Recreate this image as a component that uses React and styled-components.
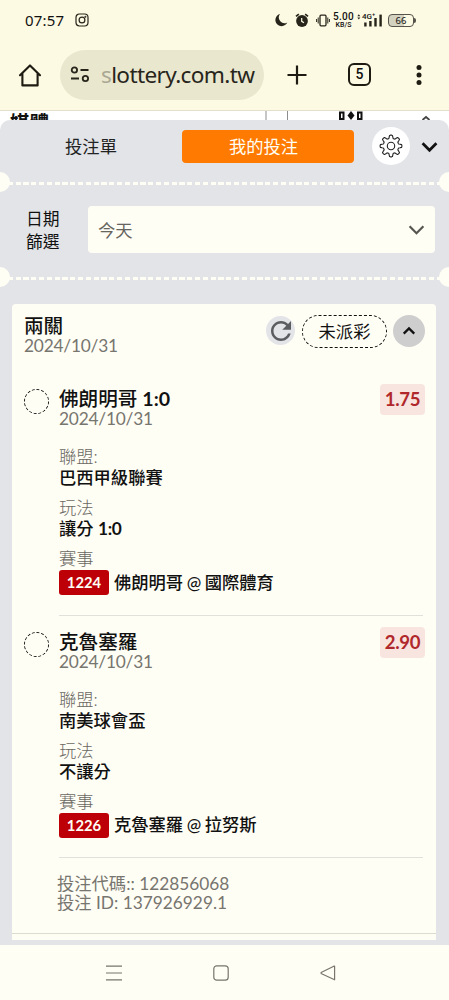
import React, { useState } from 'react';
import styled, { createGlobalStyle } from 'styled-components';

const legs = [
  {
    id: '1224',
    pick: '佛朗明哥',
    score: '1:0',
    date: '2024/10/31',
    odds: '1.75',
    league: '巴西甲級聯賽',
    market: '讓分',
    handicap: '1:0',
    match: '佛朗明哥 @ 國際體育',
  },
  {
    id: '1226',
    pick: '克魯塞羅',
    date: '2024/10/31',
    odds: '2.90',
    league: '南美球會盃',
    market: '不讓分',
    match: '克魯塞羅 @ 拉努斯',
  },
];

const StatusIcons = () => (
  <StatusRight>
    <svg width="13" height="14" viewBox="0 0 13 14">
      <path d="M5 1A6.2 6.2 0 1 0 12.3 9.4A5.7 5.7 0 0 1 5 1Z" fill="#27251b" />
    </svg>
    <svg width="14" height="15" viewBox="0 0 14 15">
      <circle cx="7" cy="8" r="5.9" fill="#27251b" />
      <path d="M1 3.4L3.8 1.1M13 3.4L10.2 1.1" stroke="#27251b" strokeWidth="1.7" />
      <path d="M6.7 5V8.3L9 9.8" stroke="#fdfae3" strokeWidth="1.2" fill="none" />
    </svg>
    <svg width="14" height="13" viewBox="0 0 14 13" fill="none" stroke="#27251b" strokeWidth="1.3">
      <rect x="4" y="1.2" width="6" height="10.6" rx="1" />
      <path d="M2.2 3.5V9.5M.6 5V8M11.8 3.5V9.5M13.4 5V8" strokeWidth="1" />
    </svg>
    <Speed>
      <b>5.00</b>
      <span>KB/S</span>
    </Speed>
    <Signal>
      <svg width="26" height="15" viewBox="0 0 26 15" fill="#27251b">
        <path d="M.3 3.2L1.8 1.2L3.3 3.2ZM.3 4.6L1.8 6.6L3.3 4.6Z" />
        <rect x="7.2" y="9.5" width="2.4" height="4" />
        <rect x="12.2" y="8" width="2.4" height="5.5" />
        <rect x="17.3" y="5" width="2.4" height="8.5" />
        <rect x="22.4" y="1.6" width="2.4" height="11.9" />
      </svg>
      <Network>4G⁺</Network>
    </Signal>
    <Battery>66</Battery>
  </StatusRight>
);

const Chevron = ({ up, size, color = '#111', weight }) => (
  <svg width={size} height={size} viewBox="0 0 16 16" fill="none" stroke={color} strokeWidth={weight}>
    <path d={up ? 'M2 11L8 5L14 11' : 'M1.5 5L8 11.5L14.5 5'} />
  </svg>
);

// gear with eight rounded teeth
const Gear = () => {
  const points = [];
  for (let i = 0; i <= 96; i++) {
    const a = (i / 96) * Math.PI * 2;
    const wave = Math.cos(a * 8);
    const r = 9.3 + 1.6 * Math.tanh(wave * 2.6);
    points.push(`${(12 + r * Math.sin(a)).toFixed(2)} ${(12 - r * Math.cos(a)).toFixed(2)}`);
  }
  return (
    <svg width="24" height="24" viewBox="0 0 24 24" fill="none" stroke="#222" strokeWidth="1.1" strokeLinejoin="round">
      <path d={`M${points.join('L')}Z`} />
      <circle cx="12" cy="12" r="3.7" />
    </svg>
  );
};

const Leg = ({ leg }) => (
  <LegRow>
    <DottedCircle />
    <LegBody>
      <LegHead>
        <div>
          <Title>{leg.pick} {leg.score && <b>{leg.score}</b>}</Title>
          <DateText>{leg.date}</DateText>
        </div>
        <Odds>{leg.odds}</Odds>
      </LegHead>
      <Field>
        <Label>聯盟:</Label>
        <Value>{leg.league}</Value>
      </Field>
      <Field>
        <Label>玩法</Label>
        <Value>{leg.market} {leg.handicap && <b>{leg.handicap}</b>}</Value>
      </Field>
      <Field>
        <Label>賽事</Label>
        <Match>
          <MatchId>{leg.id}</MatchId>
          <MatchName>{leg.match}</MatchName>
        </Match>
      </Field>
    </LegBody>
  </LegRow>
);

const App = () => {
  const [open, setOpen] = useState(true);

  return (
    <Phone>
      <GlobalStyle />
      <StatusBar>
        <Clock>07:57</Clock>
        <svg width="14" height="14" viewBox="0 0 14 14" fill="none" stroke="#27251b" strokeWidth="1.2">
          <rect x="1" y="1" width="12" height="12" rx="3.4" />
          <circle cx="7" cy="7" r="2.9" />
          <circle cx="10.4" cy="3.7" r=".4" />
        </svg>
        <StatusIcons />
      </StatusBar>

      <Toolbar>
        <HomeIcon width="24" height="24" viewBox="0 0 24 24">
          <path d="M2 12.2L12 2.4L22 12.2M4.4 10.5V22.4H19.6V10.5" />
        </HomeIcon>
        <AddressBar>
          <svg width="20" height="17" viewBox="0 0 20 17" fill="none" stroke="#27251b" strokeWidth="1.8">
            <circle cx="4.4" cy="4" r="2.7" />
            <path d="M10.5 4H18.5M1 12.5H9" />
            <circle cx="15.4" cy="12.5" r="2.7" />
          </svg>
          <Url><span>s</span>lottery.com.tw</Url>
        </AddressBar>
        <svg width="20" height="20" viewBox="0 0 20 20" stroke="#1d1b12" strokeWidth="2.2">
          <path d="M10 .5V19.5M.5 10H19.5" />
        </svg>
        <TabCount>5</TabCount>
        <svg width="6" height="20" viewBox="0 0 6 20" fill="#1d1b12">
          <circle cx="3" cy="2.5" r="2.5" />
          <circle cx="3" cy="10" r="2.5" />
          <circle cx="3" cy="17.5" r="2.5" />
        </svg>
      </Toolbar>

      <PageStrip>
        <StripText>媒體</StripText>
        <StripMarks width="170" height="9" viewBox="0 0 170 9">
          <path d="M2 0V9M23.5 0V9" stroke="#8d8d8d" />
          <path d="M76 8V1.5H79.5V8ZM94 8V1.5H97.5V8Z" stroke="#111" strokeWidth="2" fill="none" />
          <path d="M87 0L90.5 4.5L87 9L83.5 4.5Z" fill="#111" />
          <path d="M158.5 9L162 6L165.5 9" stroke="#444" strokeWidth="1.8" fill="none" />
        </StripMarks>
      </PageStrip>

      <Panel>
        <Tabs>
          <Tab>投注單</Tab>
          <ActiveTab>我的投注</ActiveTab>
          <GearButton><Gear /></GearButton>
          <Chevron size={17} weight={2.6} />
        </Tabs>
        <Perforation />
        <Filter>
          <FilterLabel>日期篩選</FilterLabel>
          <Select>
            今天
            <Chevron size={17} weight={2.1} color="#57554f" />
          </Select>
        </Filter>
        <Perforation />

        <Card>
          <CardHead>
            <div>
              <Title>兩關</Title>
              <DateText>2024/10/31</DateText>
            </div>
            <CardActions>
              <Refresh>
                <svg width="20" height="20" viewBox="4 4 16 16" fill="#5b5c60">
                  <path d="M17.65 6.35C16.2 4.9 14.21 4 12 4c-4.42 0-7.99 3.58-7.99 8s3.57 8 7.99 8c3.73 0 6.84-2.55 7.73-6h-2.08c-.82 2.33-3.04 4-5.65 4-3.31 0-6-2.69-6-6s2.69-6 6-6c1.66 0 3.14.69 4.22 1.78L13 11h7V4l-2.35 2.35z" />
                </svg>
              </Refresh>
              <Pending>未派彩</Pending>
              <Collapse onClick={() => setOpen(!open)}>
                <Chevron up={open} size={14} weight={2.6} />
              </Collapse>
            </CardActions>
          </CardHead>
          {open && legs.map((leg) => <Leg key={leg.id} leg={leg} />)}
          <Codes>
            <div>投注代碼:: 122856068</div>
            <div>投注 ID: 137926929.1</div>
          </Codes>
        </Card>
      </Panel>

      <NavBar>
        <svg width="16" height="16" viewBox="0 0 16 16">
          <path d="M0 1.2H16M0 8H16M0 14.8H16" />
        </svg>
        <svg width="16" height="16" viewBox="0 0 16 16">
          <rect x=".8" y=".8" width="14.4" height="14.4" rx="3" />
        </svg>
        <svg width="16" height="16" viewBox="0 0 16 16">
          <path d="M14.6 1.2V14.8L1.6 8.8Q.4 8 1.6 7.2L13.8 1.2Z" strokeLinejoin="round" />
        </svg>
      </NavBar>
    </Phone>
  );
};

const GlobalStyle = createGlobalStyle`
  * {
    box-sizing: border-box;
  }

  body {
    margin: 0;
    background: #fffef5;
    font-family: Lato, "Noto Sans CJK TC", sans-serif;
    font-size: 17.3px;
    color: #111;
  }

  svg {
    display: block;
    flex-shrink: 0;
  }
`;

const Phone = styled.div`
  display: flex;
  flex-direction: column;
  width: 449px;
  height: 1000px;
  overflow: hidden;
  background: #fff;
`;

const StatusBar = styled.div`
  display: flex;
  align-items: center;
  height: 40px;
  padding: 0 35px 0 25px;
  background: #fdfae3;
`;

const Clock = styled.div`
  width: 50px;
  font-family: "Noto Sans", sans-serif;
  font-size: 15px;
  letter-spacing: 0.2px;
  white-space: nowrap;
`;

const StatusRight = styled.div`
  display: flex;
  align-items: center;
  gap: 7px;
  margin-left: auto;
`;

const Speed = styled.div`
  display: flex;
  flex-direction: column;
  align-items: center;
  width: 21px;
  margin: 0 -4px;
  font-family: Roboto, sans-serif;
  font-size: 7px;
  font-weight: 500;
  line-height: 7px;

  b {
    font-size: 10px;
    line-height: 10px;
    letter-spacing: 0.3px;
    font-weight: 500;
  }
`;

const Signal = styled.div`
  position: relative;
`;

const Network = styled.span`
  position: absolute;
  left: 5px;
  top: -1px;
  font: 500 8px/9px Roboto, sans-serif;
`;

const Battery = styled.div`
  position: relative;
  width: 26px;
  height: 13px;
  margin-left: -2px;
  border: 1px solid #55534a;
  border-radius: 4px;
  background: linear-gradient(90deg, #d3d1bf 64%, #fdfae3 64%);
  font: 9.5px/11px "Noto Sans", sans-serif;
  text-align: center;

  &::after {
    content: '';
    position: absolute;
    right: -3px;
    top: 3px;
    width: 2px;
    height: 5px;
    border-radius: 0 2px 2px 0;
    background: #55534a;
  }
`;

const Toolbar = styled.div`
  display: flex;
  align-items: center;
  height: 71px;
  padding: 0 27px 1px 18px;
  border-bottom: 1px solid #e2dfca;
  background: #fdfae3;

  > svg:last-child {
    margin-left: 45px;
  }
`;

const HomeIcon = styled.svg`
  fill: none;
  stroke: #1d1b12;
  stroke-width: 2.1;
  stroke-linejoin: round;
  stroke-linecap: round;
`;

const AddressBar = styled.div`
  display: flex;
  align-items: center;
  gap: 11px;
  width: 204px;
  height: 50px;
  margin: 0 23px 0 18px;
  padding-left: 10px;
  border-radius: 25px;
  background: #e9e7ce;
`;

const Url = styled.div`
  font-family: "Noto Sans", sans-serif;
  font-size: 22.6px;
  letter-spacing: -0.65px;
  line-height: 30px;
  color: #27251b;
  white-space: nowrap;

  span {
    color: #aaa894;
  }
`;

const TabCount = styled.div`
  width: 23px;
  height: 23px;
  margin-left: 41px;
  border: 2.3px solid #1d1b12;
  border-radius: 6px;
  font: 500 14px/19px Roboto, sans-serif;
  text-align: center;
`;

const PageStrip = styled.div`
  display: flex;
  justify-content: space-between;
  height: 9px;
  padding: 0 15px 0 10px;
  overflow: hidden;
`;

const StripText = styled.div`
  margin-top: 2px;
  font-size: 19.5px;
  font-weight: 700;
  line-height: 20px;
`;

const StripMarks = styled.svg`
  margin-right: 0;
`;

const Panel = styled.div`
  display: flex;
  flex-direction: column;
  height: 825px;
  border-radius: 10px 10px 0 0;
  background: #e3e4e8;
`;

const Tabs = styled.div`
  display: flex;
  align-items: center;
  height: 62px;
  padding: 0 11px 10px 5px;
`;

const Tab = styled.div`
  width: 172px;
  height: 33px;
  color: #222;
  line-height: 34px;
  text-align: center;
`;

const ActiveTab = styled(Tab)`
  margin-left: 5px;
  padding-right: 9px;
  border-radius: 4px;
  background: #ff7a00;
  color: #fffef5;
`;

const GearButton = styled.div`
  display: grid;
  place-items: center;
  width: 38px;
  height: 38px;
  margin: 0 11px 0 18px;
  border-radius: 50%;
  background: #fff;
`;

// dashed tear line with a notch on either side
const Perforation = styled.div`
  position: relative;
  height: 3px;
  background: repeating-linear-gradient(90deg, #fffef5 0 5.2px, transparent 5.2px 7.8px);

  &::before,
  &::after {
    content: '';
    position: absolute;
    top: -10px;
    width: 20px;
    height: 20px;
    border-radius: 50%;
    background: #fffef5;
  }

  &::before {
    left: -10px;
  }

  &::after {
    right: -10px;
  }
`;

const Filter = styled.div`
  display: flex;
  align-items: center;
  height: 92px;
  padding: 0 14px 3px 26px;
`;

const FilterLabel = styled.div`
  width: 36px;
  margin-right: 26px;
  font-size: 16.8px;
  line-height: 23px;
`;

const Select = styled.div`
  display: flex;
  flex: 1;
  align-items: center;
  justify-content: space-between;
  height: 47px;
  padding: 0 10px;
  border-radius: 4px;
  background: #fffef5;
  color: #66645f;
`;

const Card = styled.div`
  display: flex;
  flex-direction: column;
  height: 636px;
  margin: 24px 13px 0 12px;
  border-radius: 4px 4px 0 0;
  background: #fffef5;
`;

const CardHead = styled.div`
  display: flex;
  justify-content: space-between;
  height: 80px;
  padding: 11px 11px 0 12px;
`;

const Title = styled.div`
  font-size: 19.6px;
  font-weight: 500;
  line-height: 21px;
`;

const DateText = styled.div`
  line-height: 20px;
  letter-spacing: -0.2px;
  color: #77756f;
`;

const CardActions = styled.div`
  display: flex;
`;

const Refresh = styled.div`
  display: grid;
  place-items: center;
  width: 29px;
  height: 29px;
  margin: 1px 7px 0 0;
  border-radius: 50%;
  background: #e3e4e8;
`;

const Pending = styled.div`
  width: 85px;
  height: 33px;
  margin-right: 6px;
  border: 1.2px dashed #111;
  border-radius: 17px;
  line-height: 32px;
  text-align: center;
`;

const Collapse = styled.div`
  display: grid;
  place-items: center;
  width: 32px;
  height: 32px;
  border-radius: 50%;
  background: #cecece;
  cursor: pointer;
`;

const LegRow = styled.div`
  display: flex;
  height: 242.5px;
  padding: 4px 13px 0 12px;
`;

const DottedCircle = styled.div`
  flex-shrink: 0;
  width: 25px;
  height: 25px;
  margin: 1px 10px 0 0;
  border: 1.2px dashed #111;
  border-radius: 50%;
`;

const LegBody = styled.div`
  flex: 1;
  height: 227.5px;
  border-bottom: 1px solid #e2e0db;
`;

const LegHead = styled.div`
  display: flex;
  justify-content: space-between;
  height: 59px;
`;

const Odds = styled.div`
  width: 45px;
  height: 31px;
  margin: -4px -2px 0 0;
  border-radius: 4px;
  background: #f8e5df;
  color: #b0282b;
  font-size: 18.6px;
  letter-spacing: -0.3px;
  font-weight: 700;
  line-height: 30px;
  text-align: center;
`;

const Field = styled.div`
  height: 51px;
`;

const Label = styled.div`
  line-height: 20px;
  color: #6a6862;
  font-weight: 300;
`;

const Value = styled.div`
  line-height: 21px;
  font-weight: 500;
  white-space: nowrap;

  b {
    letter-spacing: -0.3px;
  }
`;

const MatchName = styled(Value)`
  word-spacing: -0.8px;
  margin-bottom: 1px;
`;

const Match = styled.div`
  display: flex;
  align-items: center;
  gap: 5px;
  margin-top: 1px;
`;

const MatchId = styled.div`
  width: 50px;
  height: 25px;
  border-radius: 3px;
  background: #bd0007;
  color: #fffef5;
  font-size: 14.8px;
  font-weight: 700;
  line-height: 25px;
  text-align: center;
`;

const Codes = styled.div`
  height: 65px;
  padding: 6px 0 0 45px;
  border-bottom: 1px solid #dedccf;
  line-height: 18.8px;
  color: #77756f;
`;

const NavBar = styled.div`
  display: flex;
  align-items: center;
  justify-content: center;
  gap: 91px;
  height: 55px;
  padding-right: 7px;
  background: #fffef5;

  svg {
    fill: none;
    stroke: #77756c;
    stroke-width: 1.2;
  }
`;

export default App;
